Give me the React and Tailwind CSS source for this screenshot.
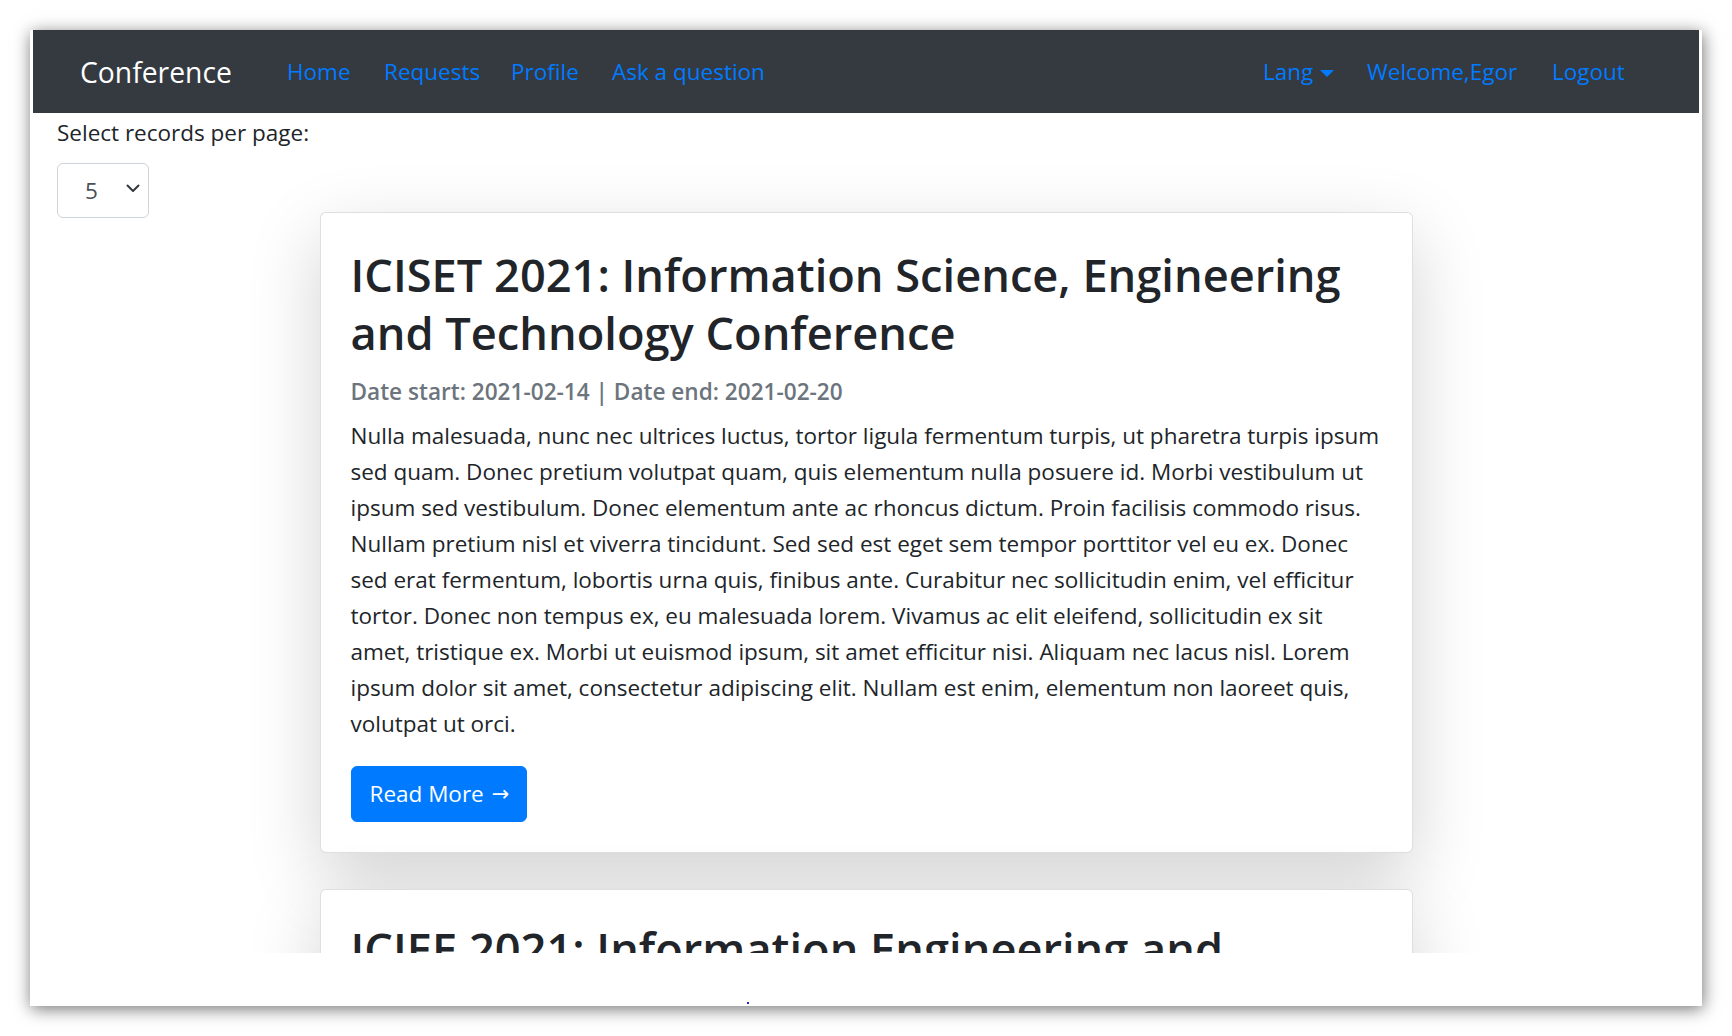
import React from "react";

const para = [
  "Nulla malesuada, nunc nec ultrices luctus, tortor ligula fermentum turpis, ut pharetra turpis ipsum",
  "sed quam. Donec pretium volutpat quam, quis elementum nulla posuere id. Morbi vestibulum ut",
  "ipsum sed vestibulum. Donec elementum ante ac rhoncus dictum. Proin facilisis commodo risus.",
  "Nullam pretium nisl et viverra tincidunt. Sed sed est eget sem tempor porttitor vel eu ex. Donec",
  "sed erat fermentum, lobortis urna quis, finibus ante. Curabitur nec sollicitudin enim, vel efficitur",
  "tortor. Donec non tempus ex, eu malesuada lorem. Vivamus ac elit eleifend, sollicitudin ex sit",
  "amet, tristique ex. Morbi ut euismod ipsum, sit amet efficitur nisi. Aliquam nec lacus nisl. Lorem",
  "ipsum dolor sit amet, consectetur adipiscing elit. Nullam est enim, elementum non laoreet quis,",
  "volutpat ut orci.",
];

function NavLink({ children, w }) {
  return (
    <a className={`block whitespace-nowrap text-[22.5px] leading-[36px] text-[#007bff] ${w}`}>{children}</a>
  );
}

export default function App() {
  return (
    <div className="w-[1732px] h-[1036px] bg-white overflow-hidden pt-[30px] pl-[30px] font-['Open_Sans',sans-serif] text-[#212529]">
      <div className="w-[1672px] h-[976px] bg-white shadow-[1px_3px_16px_rgba(0,0,0,0.55)] flex flex-col px-[3px]">
        <div className="h-[923px] shrink-0 overflow-hidden flex flex-col bg-white">
          <nav className="h-[83px] shrink-0 bg-[#343a40] flex items-center pl-[47px] pr-[73px] pt-[1px]">
            <span className="text-[28.3px] leading-[45px] text-white whitespace-nowrap w-[150px]">Conference</span>
            <div className="flex items-center gap-[33px] ml-[57px]">
              <NavLink w="w-[64px]">Home</NavLink>
              <NavLink w="w-[94px]">Requests</NavLink>
              <NavLink w="w-[68px]">Profile</NavLink>
              <NavLink w="w-[154px]">Ask a question</NavLink>
            </div>
            <div className="flex items-center gap-[33px] ml-auto">
              <a className="flex items-center whitespace-nowrap text-[22.5px] leading-[36px] text-[#007bff] w-[71px]">
                Lang
                <span className="ml-[7px] mt-[2px] w-0 h-0 border-t-[7px] border-t-[#007bff] border-x-[7px] border-x-transparent"></span>
              </a>
              <NavLink w="w-[152px]">Welcome,Egor</NavLink>
              <NavLink w="w-[74px]">Logout</NavLink>
            </div>
          </nav>

          <div className="pl-[24px] pt-[2px]">
            <div className="text-[22.5px] leading-[36px] whitespace-nowrap">Select records per page:</div>
            <div className="mt-[12px] w-[92px] h-[55px] border border-[#ced4da] rounded-[6px] flex items-center justify-between pl-[27px] pr-[8px] bg-white">
              <span className="text-[22.5px] text-[#495057] leading-[36px]">5</span>
              <svg width="14" height="9" viewBox="0 0 14 9" className="mt-[-4px]">
                <path d="M1.5 1.5 L7 7 L12.5 1.5" fill="none" stroke="#343a40" strokeWidth="2" strokeLinecap="round" strokeLinejoin="round" />
              </svg>
            </div>
          </div>

          <div className="flex flex-col items-center gap-[36px] mt-[-6px]">
            <div className="w-[1093px] shrink-0 bg-white border border-[rgba(0,0,0,0.125)] rounded-[6px] shadow-[0_24px_72px_rgba(0,0,0,0.175)] p-[30px]">
              <h2 className="pt-[3px] text-[45.2px] leading-[57.6px] font-semibold whitespace-nowrap">
                <span className="block">ICISET 2021: Information Science, Engineering</span>
                <span className="block">and Technology Conference</span>
              </h2>
              <h6 className="mt-[16px] text-[22.6px] leading-[29px] font-semibold text-[#6c757d] whitespace-nowrap">
                Date start: 2021-02-14 | Date end: 2021-02-20
              </h6>
              <div className="mt-[12px] text-[22.5px] leading-[36px]">
                {para.map((l, i) => (
                  <span key={i} className="block whitespace-nowrap">{l}</span>
                ))}
              </div>
              <button className="mt-[24px] h-[56px] pl-[18px] pr-[17px] bg-[#007bff] text-white text-[22.5px] leading-[36px] rounded-[6px] border border-[#007bff] whitespace-nowrap flex items-center">
                Read More
                <span className="ml-[8px] font-['DejaVu_Sans',sans-serif] text-[21px] leading-[36px]">→</span>
              </button>
            </div>
            <div className="w-[1093px] shrink-0 bg-white border border-[rgba(0,0,0,0.125)] rounded-[6px] shadow-[0_24px_72px_rgba(0,0,0,0.175)] p-[30px] h-[400px]">
              <h2 className="text-[45.2px] leading-[57.6px] font-semibold whitespace-nowrap">
                ICIEE 2021: Information Engineering and
              </h2>
            </div>
          </div>
        </div>
        <div className="h-[53px] shrink-0 bg-white">
          <div className="ml-[714px] mt-[49px] w-[2px] h-[2px] bg-[#2020e0]"></div>
        </div>
      </div>
    </div>
  );
}
